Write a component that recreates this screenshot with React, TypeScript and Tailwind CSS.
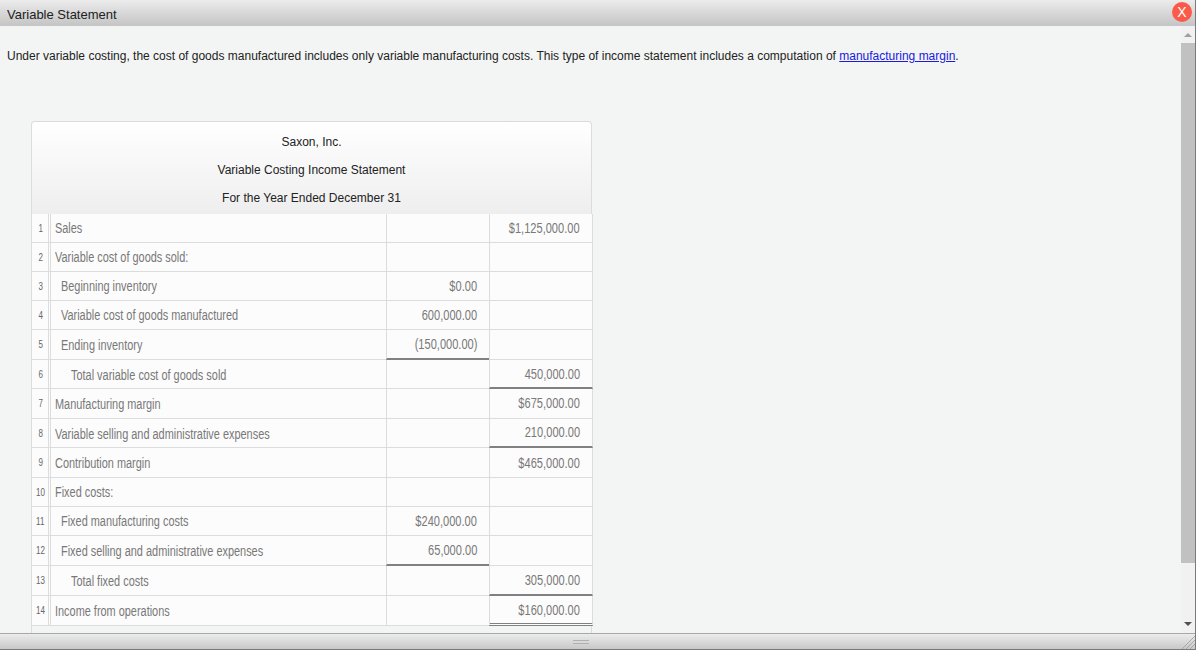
type Row = {
  label: string;
  indent?: 0 | 1 | 2;
  mid?: string;
  right?: string;
  midLine?: boolean;
  rightLine?: boolean;
  rightDouble?: boolean;
  shift?: boolean;
  shiftRight?: boolean;
  h: string;
};

const rows: Row[] = [
  { label: 'Sales', right: '$1,125,000.00', h: 'h-[29px]' },
  { label: 'Variable cost of goods sold:', h: 'h-[29px]' },
  { label: 'Beginning inventory', indent: 1, mid: '$0.00', h: 'h-[29px]' },
  { label: 'Variable cost of goods manufactured', indent: 1, mid: '600,000.00', h: 'h-[29px]' },
  { label: 'Ending inventory', indent: 1, mid: '(150,000.00)', midLine: true, shift: true, h: 'h-[30px]' },
  { label: 'Total variable cost of goods sold', indent: 2, right: '450,000.00', rightLine: true, shift: true, shiftRight: true, h: 'h-[29px]' },
  { label: 'Manufacturing margin', right: '$675,000.00', shift: true, h: 'h-[30px]' },
  { label: 'Variable selling and administrative expenses', right: '210,000.00', rightLine: true, shift: true, h: 'h-[29px]' },
  { label: 'Contribution margin', right: '$465,000.00', shift: true, shiftRight: true, h: 'h-[30px]' },
  { label: 'Fixed costs:', h: 'h-[29px]' },
  { label: 'Fixed manufacturing costs', indent: 1, mid: '$240,000.00', h: 'h-[29px]' },
  { label: 'Fixed selling and administrative expenses', indent: 1, mid: '65,000.00', midLine: true, shift: true, h: 'h-[30px]' },
  { label: 'Total fixed costs', indent: 2, right: '305,000.00', rightLine: true, shift: true, h: 'h-[30px]' },
  { label: 'Income from operations', right: '$160,000.00', rightDouble: true, shift: true, shiftRight: true, h: 'h-[30px]' },
];

function StatementRow({ row, index }: { row: Row; index: number }) {
  const indent = row.indent === 2 ? 'pl-[20px]' : row.indent === 1 ? 'pl-[10px]' : 'pl-[4px]';
  const midBorder = row.midLine ? 'border-b-2 border-b-[#808080]' : 'border-b border-b-[#dcdcdc]';
  const rightBorder = row.rightDouble
    ? 'border-b-[3px] border-double border-b-[#808080]'
    : row.rightLine
      ? 'border-b-2 border-b-[#808080]'
      : 'border-b border-b-[#dcdcdc]';

  return (
    <div className={`flex ${row.h} text-[14px] text-[#787878]`}>
      <div className="w-[17px] shrink-0 flex items-center justify-center pl-[1px] border-b border-l border-[#dcdcdc] text-[10px] text-[#666]">
        <span className="inline-block scale-x-[0.8]">{index + 1}</span>
      </div>
      <div className={`w-[338px] shrink-0 flex items-center border-b border-l-[3px] border-double border-[#dcdcdc] whitespace-nowrap ${indent} ${row.shift ? 'pt-[2px]' : ''}`}>
        <span className="inline-block origin-left scale-x-[0.78]">{row.label}</span>
      </div>
      <div className={`w-[103px] shrink-0 flex items-center justify-end pr-[12px] border-l border-l-[#dcdcdc] ${midBorder}`}>
        <span className="inline-block origin-right scale-x-[0.79]">{row.mid}</span>
      </div>
      <div className={`w-[104px] shrink-0 flex items-center justify-end pr-[12px] border-l border-r border-l-[#dcdcdc] border-r-[#dcdcdc] ${rightBorder} ${row.shiftRight ? 'pt-[2px]' : ''}`}>
        <span className="inline-block origin-right scale-x-[0.79]">{row.right}</span>
      </div>
    </div>
  );
}

export default function App() {
  return (
    <div className="w-[1202px] h-[653px] bg-white overflow-hidden font-['Liberation_Sans',Arial,sans-serif]">
      <div className="w-[1196px] h-[650px] flex flex-col border-r border-b border-[#7a7a7a]">
        {/* Title bar */}
        <div className="h-[26px] shrink-0 flex items-center justify-between pl-[7px] pr-[3px] bg-gradient-to-b from-[#ececec] to-[#c4c4c4] text-[13px] text-[#222]">
          <span className="mt-[3px]">Variable Statement</span>
          <button className="w-5 h-5 mt-[-2px] rounded-full bg-[#fb5a4a] text-white text-[14px] leading-none flex items-center justify-center">
            X
          </button>
        </div>

        {/* Body */}
        <div className="flex-1 min-h-0 flex bg-[#f3f5f4]">
          <div className="flex-1 min-w-0 overflow-hidden pl-[7px] pt-[23px]">
            <p className="text-[12px] leading-[15px] text-[#222]">
              Under variable costing, the cost of goods manufactured includes only variable manufacturing costs. This type of income statement includes a computation of{' '}
              <a href="#" className="text-[#1a1ae0] underline">manufacturing margin</a>.
            </p>

            <div className="mt-[57px] ml-[24px] w-[562px]">
              <div className="h-[93px] w-[561px] pt-[6px] border border-b-0 border-[#dcdcdc] rounded-t-[4px] bg-gradient-to-b from-white to-[#eeeeee] text-[12px] text-[#222] text-center">
                <div className="h-[28px] leading-[28px]">Saxon, Inc.</div>
                <div className="h-[28px] leading-[28px]">Variable Costing Income Statement</div>
                <div className="h-[28px] leading-[28px]">For the Year Ended December 31</div>
              </div>
              <div className="bg-[#fcfcfc]">
                {rows.map((row, i) => (
                  <StatementRow key={row.label} row={row} index={i} />
                ))}
              </div>
              <div className="h-[20px] w-[561px] border-x border-[#dcdcdc]" />
            </div>
          </div>

          {/* Scrollbar */}
          <div className="w-[14px] shrink-0 flex flex-col bg-[#f1f1f1]">
            <div className="h-[17px] shrink-0 flex items-center justify-center">
              <div className="w-0 h-0 border-x-[4px] border-x-transparent border-b-[4px] border-b-[#a0a0a0]" />
            </div>
            <div className="h-[520px] shrink-0 bg-[#c1c1c1]" />
            <div className="flex-1 flex items-end justify-center pb-[7px]">
              <div className="w-0 h-0 border-x-[4px] border-x-transparent border-t-[4px] border-t-[#505050]" />
            </div>
          </div>
        </div>

        {/* Footer */}
        <div className="relative h-[16px] shrink-0 flex items-center justify-center pr-[33px] border-t border-[#a8a8a8] bg-gradient-to-b from-[#ececec] to-[#c8c8c8]">
          <div className="w-[16px] h-[4px] border-y border-[#b0b0b0]" />
          <svg className="absolute right-0 bottom-0" width="14" height="14" viewBox="0 0 14 14">
            <path d="M14 1 1 14M14 5 5 14M14 9 9 14" stroke="#a8a8a8" strokeWidth="1" fill="none" />
          </svg>
        </div>
      </div>
    </div>
  );
}
